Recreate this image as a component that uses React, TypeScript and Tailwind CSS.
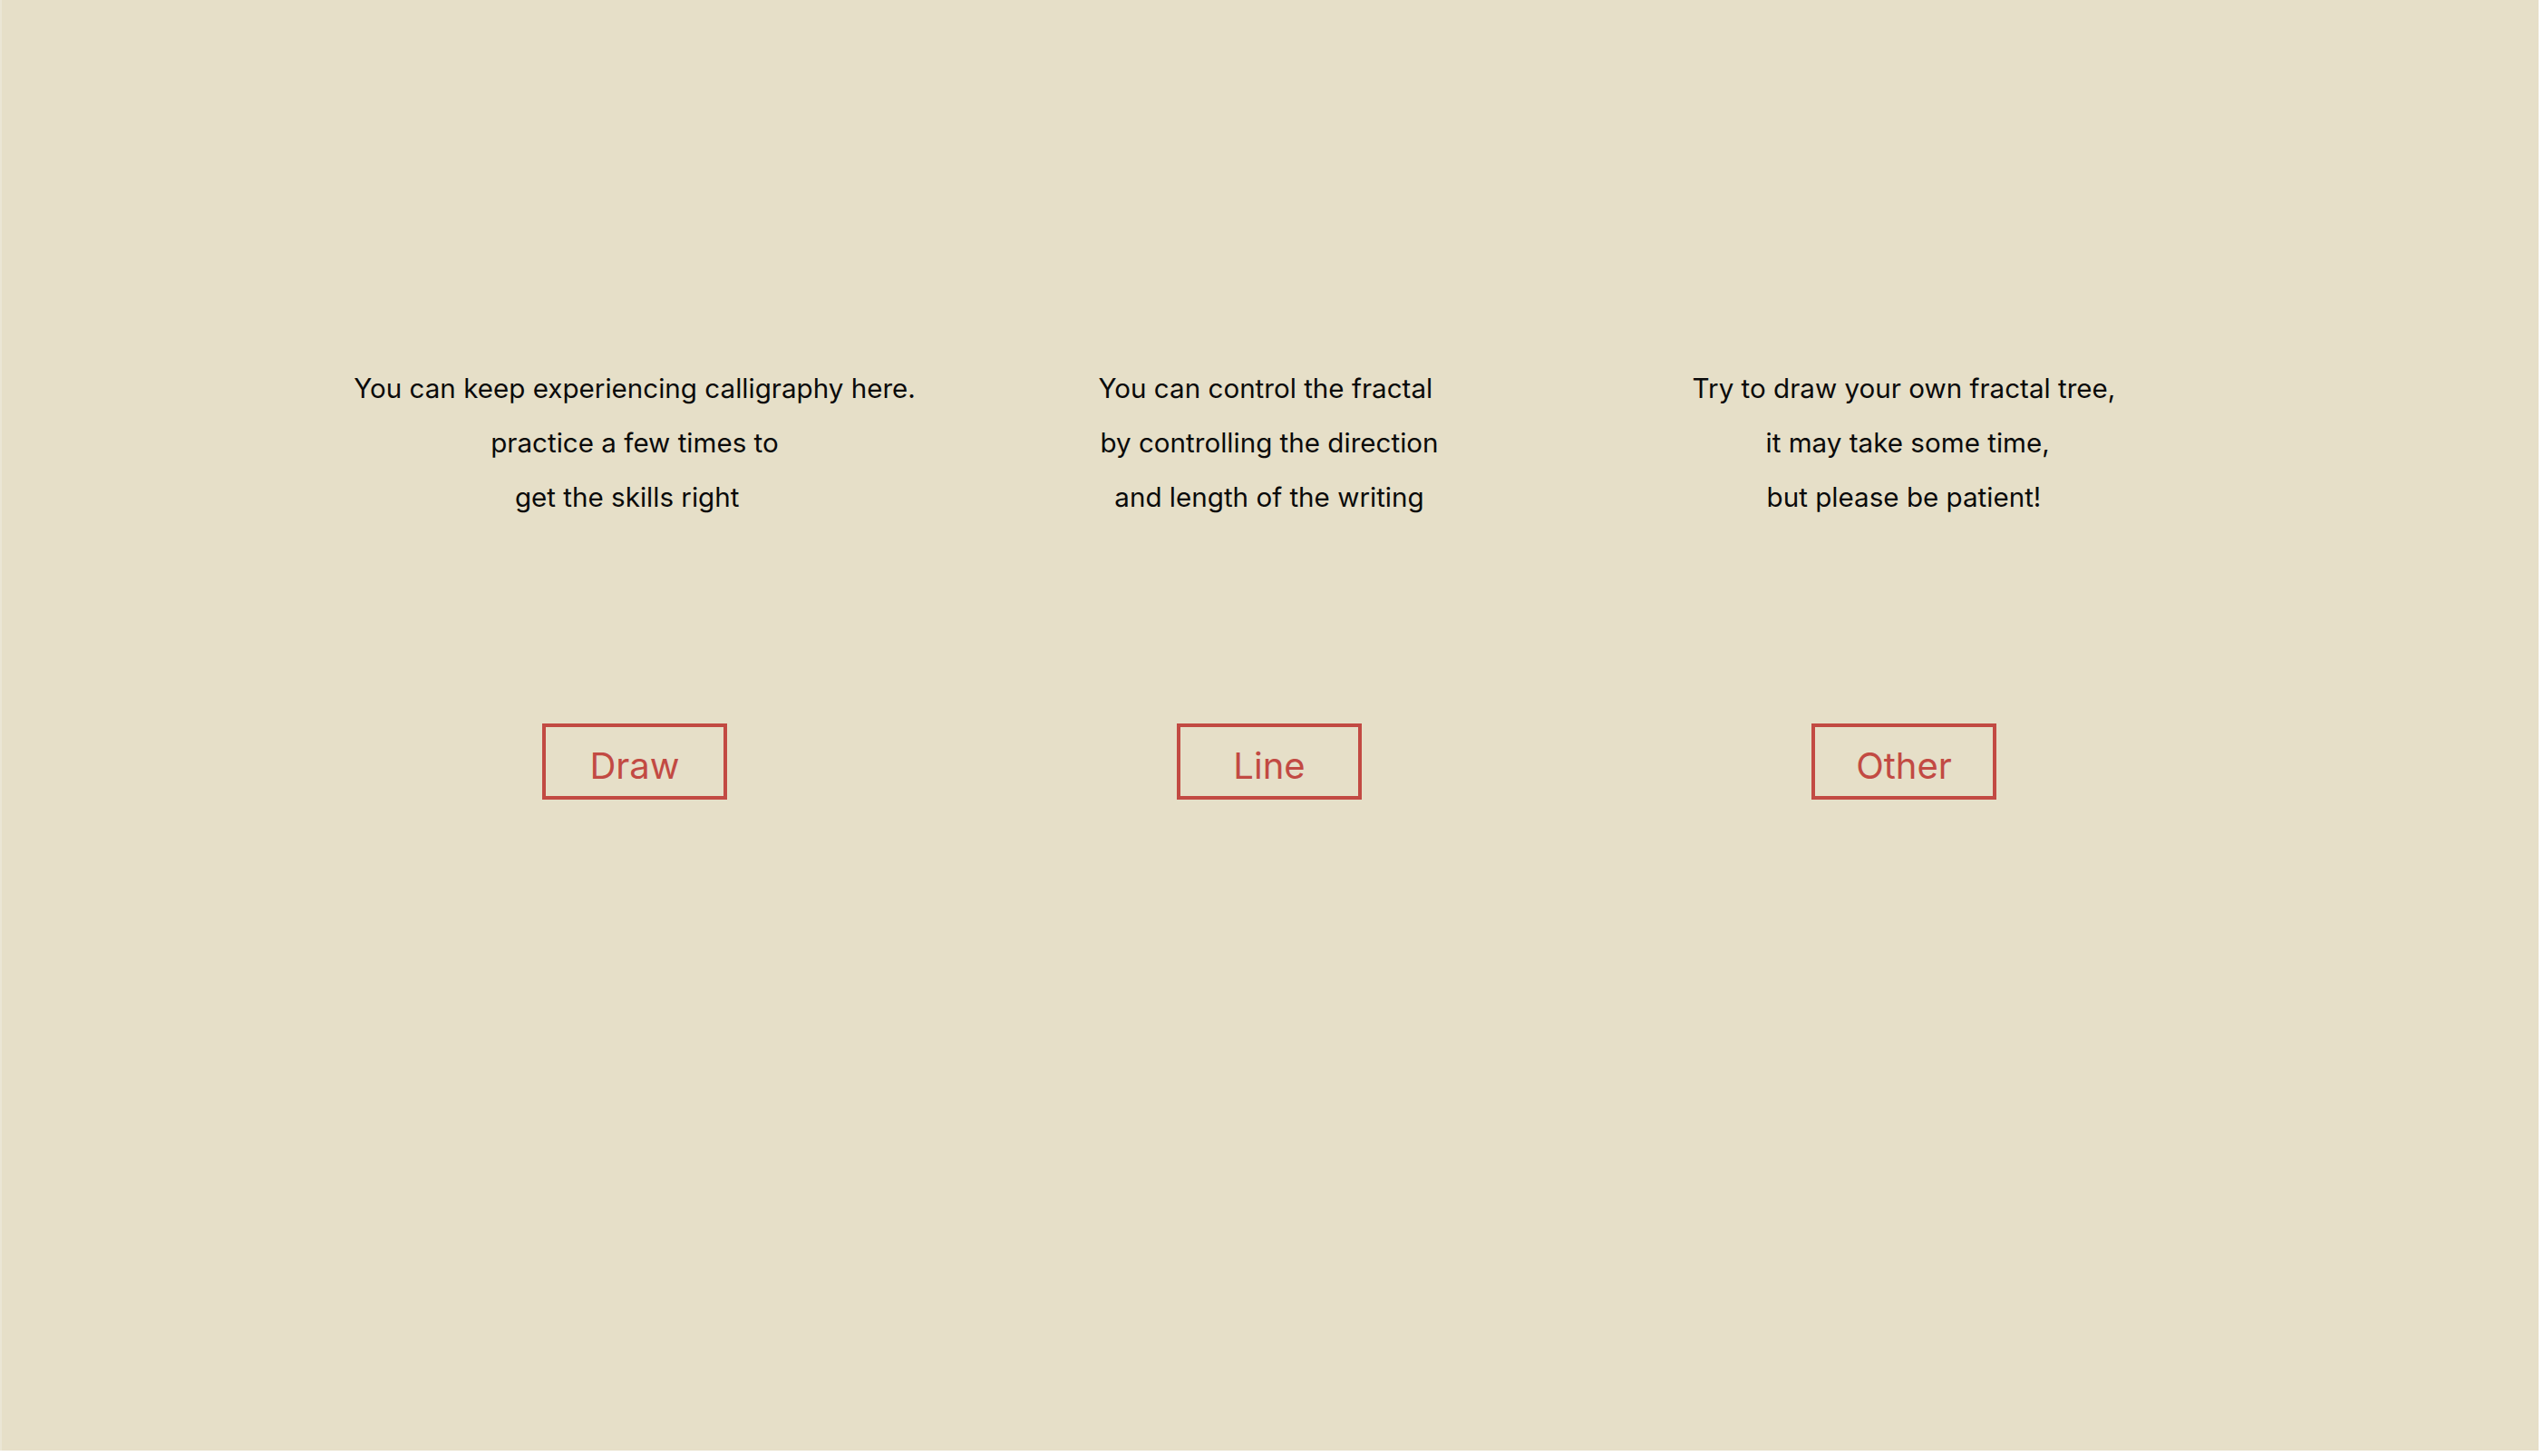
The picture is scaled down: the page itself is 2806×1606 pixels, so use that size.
const columns = [
  {
    lines: ['You can keep experiencing calligraphy here.', 'practice a few times to', 'get the skills right  '],
    label: 'Draw',
  },
  {
    lines: ['You can control the fractal ', 'by controlling the direction', 'and length of the writing'],
    label: 'Line',
  },
  {
    lines: ['Try to draw your own fractal tree,', ' it may take some time,', 'but please be patient!'],
    label: 'Other',
  },
]

export default function App() {
  return (
    <div className="w-[2806px] h-[1606px] bg-white font-['Inter','Liberation_Sans',sans-serif]">
      <div className="w-[2800px] h-[1600px] bg-[#e6dfc8] border-l-2 border-[#ebe6d5] flex px-[348px] pt-[398px]">
        {columns.map((col) => (
          <div key={col.label} className="w-[700px] flex flex-col items-center">
            <div className="text-[29.6px] leading-[60px] text-[#0a0a0a] text-center whitespace-pre">
              {col.lines.map((line) => (
                <p key={line}>{line}</p>
              ))}
            </div>
            <button className="mt-[220px] w-[204px] h-[84px] border-4 border-[#c24a43] text-[#c24a43] text-[40px] leading-none pt-[9px]">
              {col.label}
            </button>
          </div>
        ))}
      </div>
    </div>
  )
}
